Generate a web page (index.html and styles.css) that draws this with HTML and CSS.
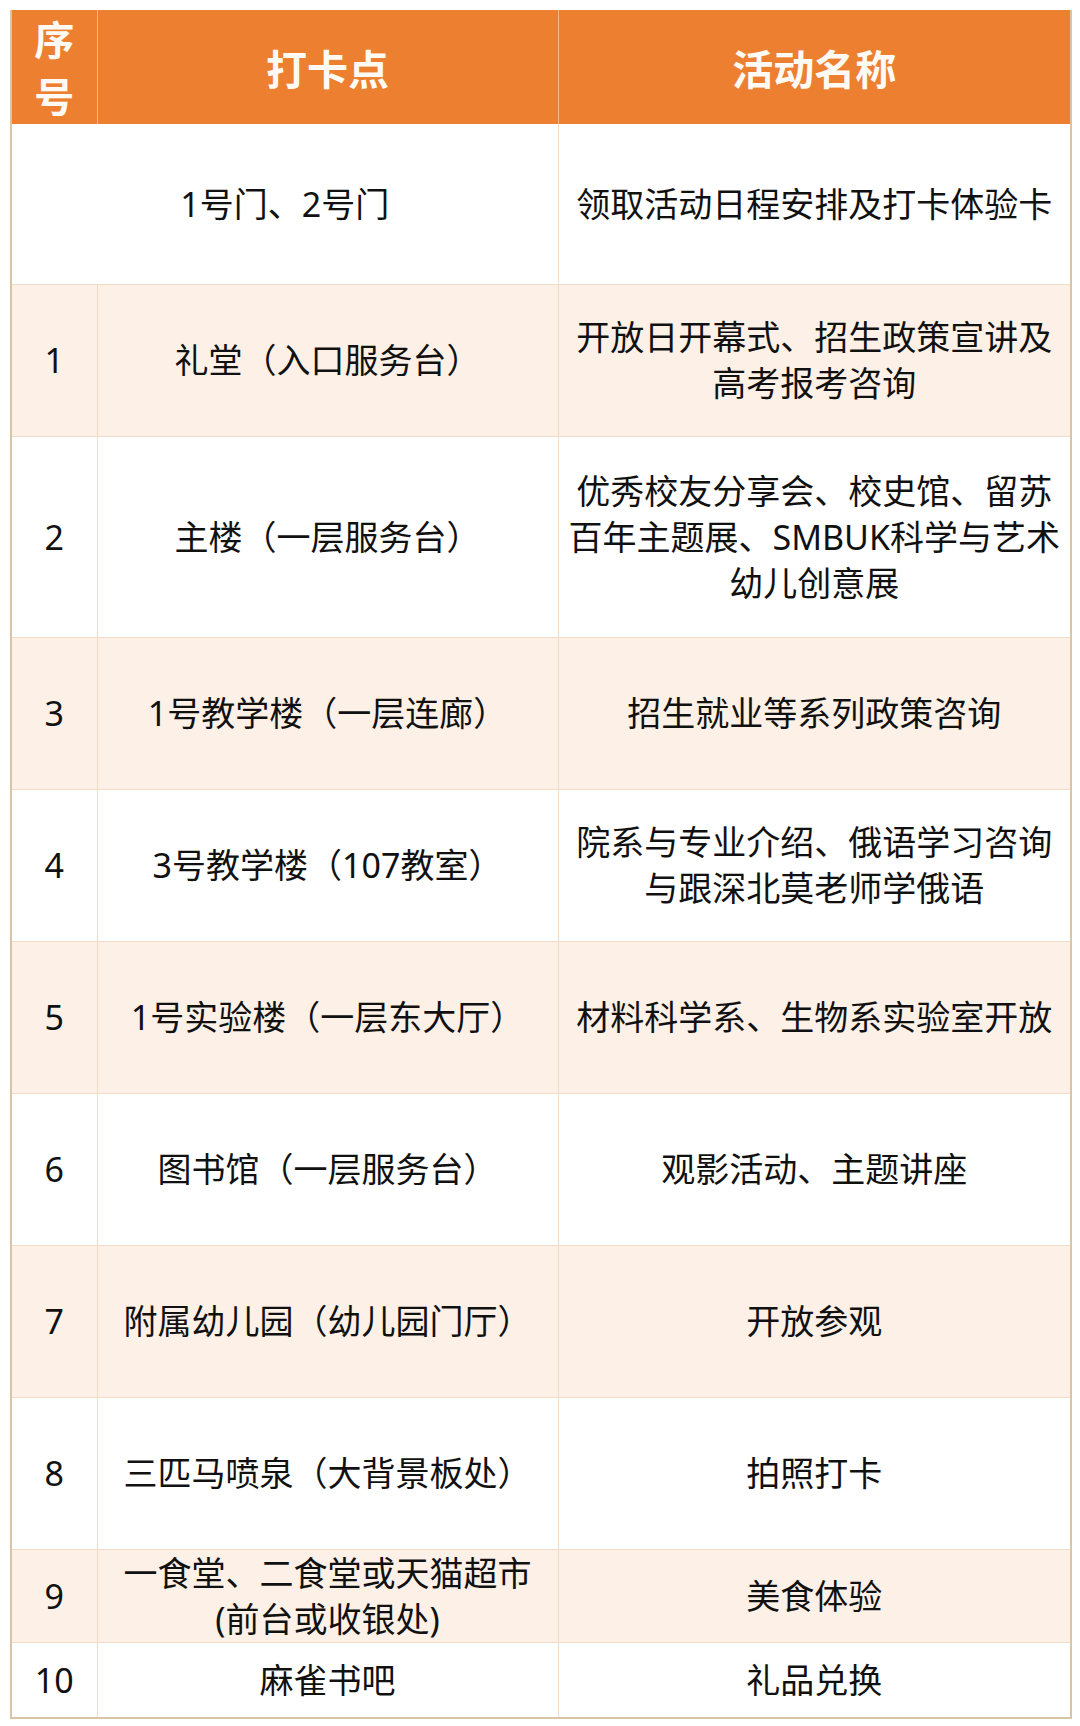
FILE: index.html
```html
<!DOCTYPE html>
<html lang="zh-CN">
<head>
<meta charset="utf-8">
<link rel="stylesheet" href="styles.css">
</head>
<body>
<table class="schedule">
  <colgroup>
    <col class="c-num">
    <col class="c-place">
    <col class="c-act">
  </colgroup>
  <thead>
    <tr class="head">
      <th class="h-num">序<br>号</th>
      <th>打卡点</th>
      <th>活动名称</th>
    </tr>
  </thead>
  <tbody>
    <tr class="r r-first">
      <td colspan="2">1号门、2号门</td>
      <td>领取活动日程安排及打卡体验卡</td>
    </tr>
    <tr class="r alt">
      <td class="num">1</td>
      <td>礼堂（入口服务台）</td>
      <td>开放日开幕式、招生政策宣讲及<br>高考报考咨询</td>
    </tr>
    <tr class="r r-tall">
      <td class="num">2</td>
      <td>主楼（一层服务台）</td>
      <td>优秀校友分享会、校史馆、留苏<br>百年主题展、SMBUK科学与艺术<br>幼儿创意展</td>
    </tr>
    <tr class="r alt">
      <td class="num">3</td>
      <td>1号教学楼（一层连廊）</td>
      <td>招生就业等系列政策咨询</td>
    </tr>
    <tr class="r">
      <td class="num">4</td>
      <td>3号教学楼（107教室）</td>
      <td>院系与专业介绍、俄语学习咨询<br>与跟深北莫老师学俄语</td>
    </tr>
    <tr class="r alt">
      <td class="num">5</td>
      <td>1号实验楼（一层东大厅）</td>
      <td>材料科学系、生物系实验室开放</td>
    </tr>
    <tr class="r">
      <td class="num">6</td>
      <td>图书馆（一层服务台）</td>
      <td>观影活动、主题讲座</td>
    </tr>
    <tr class="r alt">
      <td class="num">7</td>
      <td>附属幼儿园（幼儿园门厅）</td>
      <td>开放参观</td>
    </tr>
    <tr class="r">
      <td class="num">8</td>
      <td>三匹马喷泉（大背景板处）</td>
      <td>拍照打卡</td>
    </tr>
    <tr class="r alt r-short">
      <td class="num">9</td>
      <td>一食堂、二食堂或天猫超市<br>(前台或收银处)</td>
      <td>美食体验</td>
    </tr>
    <tr class="r r-last">
      <td class="num">10</td>
      <td>麻雀书吧</td>
      <td>礼品兑换</td>
    </tr>
  </tbody>
</table>
</body>
</html>
```

FILE: styles.css
```css
html, body {
  margin: 0;
  padding: 0;
  background: #ffffff;
}

body {
  padding: 10px 0 0 10px;
  font-family: "Noto Sans", "Noto Sans CJK SC", sans-serif;
  color: #111111;
}

.schedule {
  border-collapse: collapse;
  table-layout: fixed;
  width: 1060px;
  border: 2px solid #d9c4a6;
  border-top: none;
}

.c-num { width: 86px; }
.c-place { width: 461px; }
.c-act { width: 513px; }

.head {
  height: 113px;
  background: #ed7f31;
}

.head th {
  color: #fffaf3;
  font-family: "Noto Sans CJK SC", sans-serif;
  font-size: 41px;
  font-weight: 700;
  padding: 0;
  border-left: 1px solid #f6b98a;
  text-align: center;
  vertical-align: middle;
  line-height: 58px;
}

.head th:first-child {
  border-left: none;
}

.head .h-num {
  font-size: 40px;
  line-height: 57px;
}

.r {
  height: 152px;
  background: #ffffff;
}

.r.alt {
  background: #fcf0e7;
}

.r td {
  padding: 0;
  font-size: 34px;
  line-height: 46px;
  text-align: center;
  vertical-align: middle;
  border-top: 1px solid #f2dcc8;
  border-left: 1px solid #f2dcc8;
  white-space: nowrap;
}

.r td:first-child {
  border-left: none;
}

.r-first {
  height: 160px;
}

.r-first td {
  border-top: none;
}

.r-tall {
  height: 201px;
}

.r-short {
  height: 93px;
}

.r-last {
  height: 76px;
}

.num {
  font-size: 34px;
}
```
